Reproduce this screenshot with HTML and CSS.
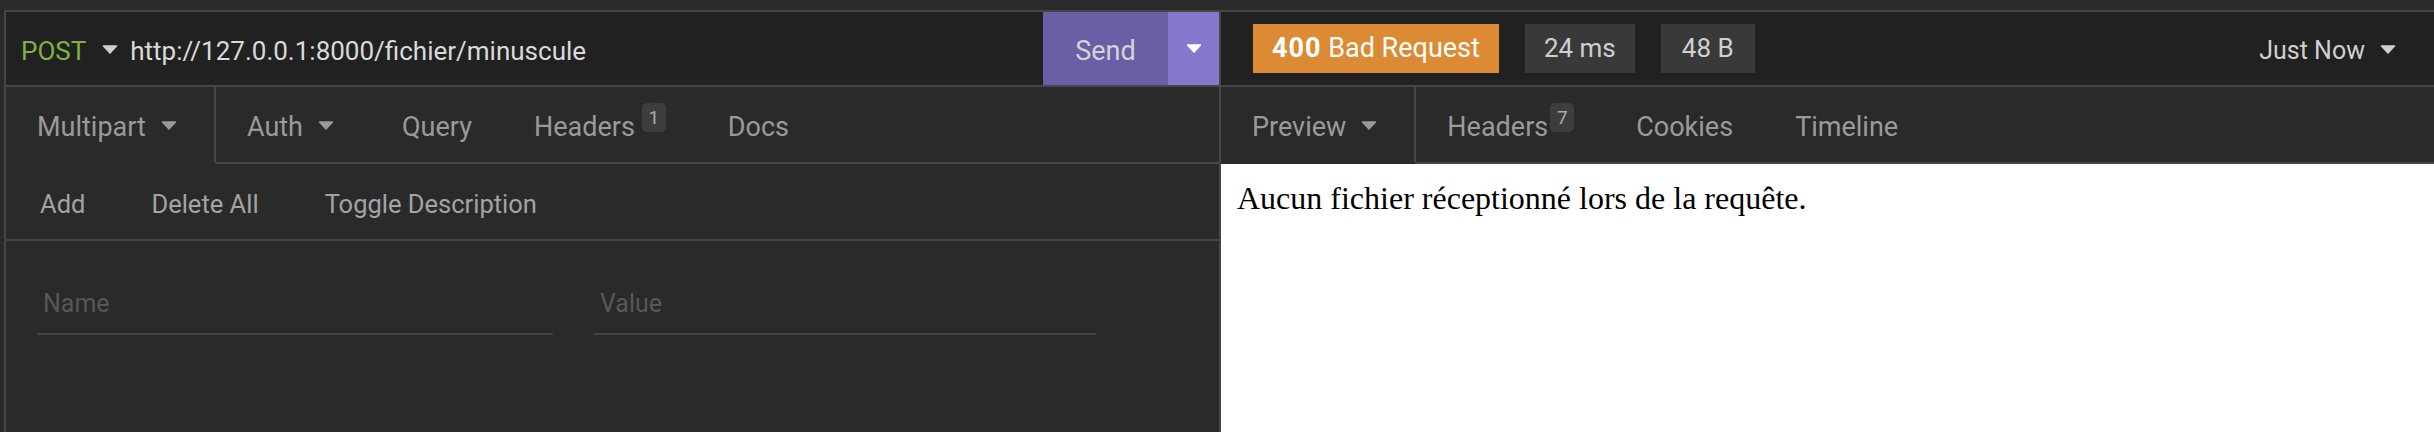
FILE: index.html
```html
<!DOCTYPE html>
<html lang="fr">
<head>
<meta charset="utf-8">
<title>Insomnia – POST fichier/minuscule</title>
<link rel="stylesheet" href="styles.css">
</head>
<body>
<div class="app">
  <section class="pane request">
    <header class="bar url-bar">
      <div class="method">POST
        <svg class="caret caret-light" width="16" height="9" viewBox="0 0 16 9"><path d="M1.5 1H14.5L8 8Z"/></svg>
      </div>
      <div class="url">http://127.0.0.1:8000/fichier/minuscule</div>
      <button class="send">Send</button>
      <button class="send-menu"><svg class="caret caret-white" width="16" height="9" viewBox="0 0 16 9"><path d="M1.5 1H14.5L8 8Z"/></svg></button>
    </header>
    <nav class="tabs">
      <div class="tab active">Multipart<svg class="caret tab-caret" width="16" height="9" viewBox="0 0 16 9"><path d="M1.5 1H14.5L8 8Z"/></svg></div>
      <div class="tab">Auth<svg class="caret tab-caret" width="16" height="9" viewBox="0 0 16 9"><path d="M1.5 1H14.5L8 8Z"/></svg></div>
      <div class="tab">Query</div>
      <div class="tab">Headers<span class="count count-wide">1</span></div>
      <div class="tab">Docs</div>
      <div class="tab-fill"></div>
    </nav>
    <div class="toolbar">
      <span class="tool">Add</span>
      <span class="tool">Delete All</span>
      <span class="tool">Toggle Description</span>
    </div>
    <div class="kv-row">
      <div class="field field-name">Name</div>
      <div class="field field-value">Value</div>
    </div>
  </section>
  <section class="pane response">
    <header class="bar status-bar">
      <span class="status"><strong>400</strong> Bad Request</span>
      <span class="meta">24 ms</span>
      <span class="meta">48 B</span>
      <span class="history">Just Now<svg class="caret caret-light" width="16" height="9" viewBox="0 0 16 9"><path d="M1.5 1H14.5L8 8Z"/></svg></span>
    </header>
    <nav class="tabs">
      <div class="tab active">Preview<svg class="caret tab-caret" width="16" height="9" viewBox="0 0 16 9"><path d="M1.5 1H14.5L8 8Z"/></svg></div>
      <div class="tab">Headers<span class="count count-tight">7</span></div>
      <div class="tab">Cookies</div>
      <div class="tab">Timeline</div>
      <div class="tab-fill"></div>
    </nav>
    <div class="preview">Aucun fichier réceptionné lors de la requête.</div>
  </section>
</div>
</body>
</html>
```

FILE: styles.css
```css
* { box-sizing: border-box; }

html, body {
  margin: 0;
  height: 432px;
  overflow: hidden;
  background: #2a2a2a;
  font-family: Roboto, "Liberation Sans", sans-serif;
}

.app {
  display: flex;
  height: 422px;
  margin: 10px 0 0 4px;
  border-top: 2px solid #464646;
  border-left: 2px solid #464646;
}

.pane {
  flex: 1 1 0;
  min-width: 0;
  display: flex;
  flex-direction: column;
  background: #2a2a2a;
}

.request { border-right: 2px solid #464646; }

/* top bars */
.bar {
  height: 75px;
  flex: none;
  display: flex;
  align-items: center;
  background: #212121;
  border-bottom: 2px solid #464646;
}

.caret { display: block; flex: none; }
.caret path { stroke-width: 1.5; stroke-linejoin: round; }
.caret-light path { fill: #cfcfcf; stroke: #cfcfcf; }
.caret-white path { fill: #ffffff; stroke: #ffffff; }
.tab-caret path { fill: #9a9a9a; stroke: #9a9a9a; }

.method {
  display: flex;
  align-items: center;
  gap: 16px;
  padding: 4px 0 0 15px;
  font-size: 26px;
  color: #7db43f;
}
.method .caret { margin-top: -3px; }

.url {
  flex: 1;
  padding: 4px 0 0 12px;
  font-size: 26px;
  color: #dadada;
  white-space: nowrap;
}

.send, .send-menu {
  align-self: stretch;
  border: 0;
  margin: 0;
  display: flex;
  align-items: center;
  justify-content: center;
  font-family: inherit;
}
.send {
  width: 125px;
  padding: 4px 0 0;
  background: #6a5ea7;
  color: #d4d4d4;
  font-size: 27px;
}
.send-menu {
  width: 51px;
  padding: 0;
  background: #8577cc;
}

/* tabs */
.tabs {
  height: 77px;
  flex: none;
  display: flex;
}
.tab {
  display: flex;
  align-items: center;
  padding: 4px 31px 0;
  font-size: 27px;
  color: #9a9a9a;
  white-space: nowrap;
  border-bottom: 2px solid #464646;
}
.tab.active {
  border-bottom-color: transparent;
  border-right: 2px solid #464646;
}
.tab-caret { margin: -2px 6px 0 15px; }
.tab-fill { flex: 1; border-bottom: 2px solid #464646; }

.count {
  display: inline-flex;
  align-items: center;
  justify-content: center;
  width: 24px;
  height: 29px;
  margin-bottom: 19px;
  border-radius: 5px;
  background: #3d3d3d;
  color: #ababab;
  font-size: 19px;
}
.count-wide { margin-left: 7px; }
.count-tight { margin-left: 2px; }

/* toolbar */
.toolbar {
  height: 77px;
  flex: none;
  display: flex;
  align-items: center;
  gap: 66px;
  padding: 4px 0 0 34px;
  border-bottom: 2px solid #464646;
  font-size: 25.5px;
  color: #a3a3a3;
}

/* key / value */
.kv-row {
  display: flex;
  gap: 41px;
  padding: 40px 0 0 31px;
}
.field {
  padding: 8px 6px 14px;
  line-height: 30px;
  font-size: 25px;
  color: #575757;
  border-bottom: 2px solid #424242;
}
.field-name { width: 516px; }
.field-value { width: 502px; }

/* response */
.status-bar { padding: 0 32px; }
.status {
  height: 49px;
  line-height: 49px;
  padding: 0 19px;
  background: #dc8a33;
  color: #ffffff;
  font-size: 27px;
  white-space: nowrap;
}
.status strong { font-weight: 700; letter-spacing: 1px; }
.meta {
  height: 49px;
  line-height: 49px;
  margin-left: 26px;
  padding: 0 19px;
  background: #393939;
  color: #d0d0d0;
  font-size: 26px;
}
.meta + .meta { padding: 0 21px; }
.history {
  margin-left: auto;
  display: flex;
  align-items: center;
  padding-top: 3px;
  font-size: 25px;
  color: #d0d0d0;
}
.history .caret { margin: -2px 6px 0 15px; }

.preview {
  flex: 1;
  background: #ffffff;
  padding: 16px;
  font-family: "Liberation Serif", "Times New Roman", serif;
  font-size: 32px;
  color: #000000;
}
```
